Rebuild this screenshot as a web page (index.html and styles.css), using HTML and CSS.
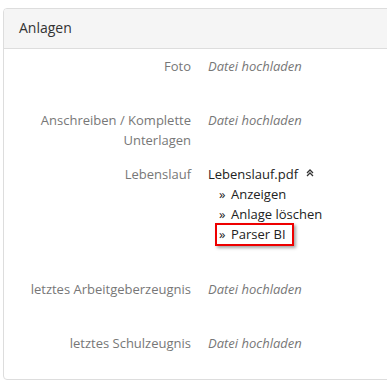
FILE: index.html
```html
<!DOCTYPE html>
<html lang="de">
<head>
<meta charset="utf-8">
<link rel="stylesheet" href="styles.css">
</head>
<body>
<div class="panel">
  <div class="panel-heading">Anlagen</div>
  <div class="panel-body">
    <div class="row">
      <div class="label">Foto</div>
      <div class="value"><span class="upload">Datei hochladen</span></div>
    </div>
    <div class="row">
      <div class="label">Anschreiben / Komplette Unterlagen</div>
      <div class="value"><span class="upload">Datei hochladen</span></div>
    </div>
    <div class="row row-files">
      <div class="label">Lebenslauf</div>
      <div class="value">
        <div class="file">Lebenslauf.pdf
          <svg class="chev" width="8" height="8" viewBox="0 0 8 8"><path d="M1 4 L4 1 L7 4 M1 7 L4 4 L7 7" fill="none" stroke="#333" stroke-width="1.3"/></svg>
        </div>
        <ul class="actions">
          <li><span class="raquo">»</span>Anzeigen</li>
          <li><span class="raquo">»</span>Anlage löschen</li>
          <li class="highlight"><span class="raquo">»</span>Parser BI</li>
        </ul>
      </div>
    </div>
    <div class="row">
      <div class="label">letztes Arbeitgeberzeugnis</div>
      <div class="value"><span class="upload">Datei hochladen</span></div>
    </div>
    <div class="row last">
      <div class="label">letztes Schulzeugnis</div>
      <div class="value"><span class="upload">Datei hochladen</span></div>
    </div>
  </div>
</div>
</body>
</html>
```
FILE: styles.css
```css
html, body {
  margin: 0;
  padding: 0;
  background: #fff;
}
body {
  font-family: "Open Sans", "Liberation Sans", sans-serif;
  font-size: 13px;
  line-height: 20px;
  color: #333;
  padding: 8px 0 0 3px;
  overflow: hidden;
}
.panel {
  width: 400px;
  height: 372px;
  box-sizing: border-box;
  border: 1px solid #ddd;
  border-radius: 4px;
  overflow: hidden;
}
.panel-heading {
  background: #f5f5f5;
  border-bottom: 1px solid #ddd;
  height: 40px;
  box-sizing: border-box;
  padding: 9px 15px 0;
  font-size: 14px;
  line-height: 20px;
  color: #333;
}
.panel-body {
  padding-top: 7px;
}
.row {
  display: flex;
  min-height: 40px;
  margin-bottom: 14px;
}
.row.last { margin-bottom: 0; }
.label {
  width: 187px;
  flex: none;
  text-align: right;
  color: #777;
  padding-left: 20px;
  box-sizing: border-box;
}
.value {
  padding-left: 17px;
}
.upload {
  font-style: italic;
  color: #777;
}
.file {
  color: #222;
  display: flex;
  align-items: center;
}
.chev { margin-left: 8px; margin-top: -2px; }
.actions {
  list-style: none;
  margin: 0 0 19px;
  padding: 0;
}
.actions li {
  color: #222;
  padding-left: 12px;
}
.raquo {
  display: inline-block;
  width: 12px;
  margin-left: -1px;
}
.actions li.highlight {
  display: inline-block;
  margin-left: 7px;
  padding: 0 6px 0 3px;
  border: 2px solid #e00;
  line-height: 19px;
  box-shadow: 2px 2px 3px rgba(0,0,0,0.35);
  margin-top: -1px;
}
```
